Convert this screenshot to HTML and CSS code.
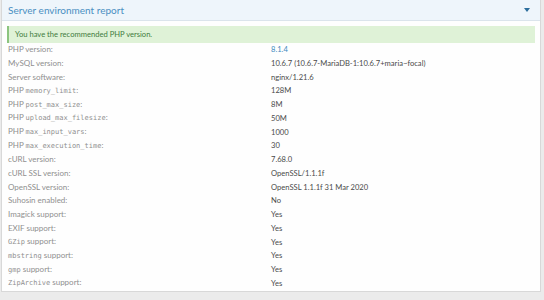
FILE: index.html
```html
<!DOCTYPE html>
<html lang="en">
<head>
<meta charset="UTF-8" />
<meta name="viewport" content="width=device-width, initial-scale=1" />
<title>Server environment report</title>
<link rel="stylesheet" href="styles.css">
</head>
<body>

<div class="block">
  <div class="block-header">
    <span>Server environment report</span>
    <span class="caret"></span>
  </div>

  <div class="block-body">
    <div class="notice">You have the recommended PHP version.</div>

    <dl class="pairs">
      <dt>PHP version:</dt><dd><a href="#">8.1.4</a></dd>
      <dt>MySQL version:</dt><dd>10.6.7 (10.6.7-MariaDB-1:10.6.7+maria~focal)</dd>
      <dt>Server software:</dt><dd>nginx/1.21.6</dd>
      <dt>PHP <code>memory_limit</code>:</dt><dd>128M</dd>
      <dt>PHP <code>post_max_size</code>:</dt><dd>8M</dd>
      <dt>PHP <code>upload_max_filesize</code>:</dt><dd>50M</dd>
      <dt>PHP <code>max_input_vars</code>:</dt><dd>1000</dd>
      <dt>PHP <code>max_execution_time</code>:</dt><dd>30</dd>
      <dt>cURL version:</dt><dd>7.68.0</dd>
      <dt>cURL SSL version:</dt><dd>OpenSSL/1.1.1f</dd>
      <dt>OpenSSL version:</dt><dd>OpenSSL 1.1.1f  31 Mar 2020</dd>
      <dt>Suhosin enabled:</dt><dd>No</dd>
      <dt>Imagick support:</dt><dd>Yes</dd>
      <dt>EXIF support:</dt><dd>Yes</dd>
      <dt><code>GZip</code> support:</dt><dd>Yes</dd>
      <dt><code>mbstring</code> support:</dt><dd>Yes</dd>
      <dt><code>gmp</code> support:</dt><dd>Yes</dd>
      <dt><code>ZipArchive</code> support:</dt><dd>Yes</dd>
    </dl>
  </div>
</div>

</body>
</html>
```

FILE: styles.css
```css
body {
  font-family: Lato, "Noto Sans", sans-serif;
  background: #ebebeb;
  color: #505050;
  margin: 0; padding: 0;
}
.block {
  width: 540px;
  margin: 0 0 0 1px;
  background: #fefefe;
  border: 1px solid #d8d8d8;
  border-top: none;
  box-sizing: border-box;
}
.block-header {
  display: flex;
  justify-content: space-between;
  align-items: center;
  height: 20px;
  padding: 0 10px 0 6px;
  background: #eef5fb;
  border-bottom: 1px solid #dbe4ec;
  color: #4a8fc2;
  font-size: 10px;
}
.caret {
  width: 0; height: 0;
  border-left: 3.5px solid transparent;
  border-right: 3.5px solid transparent;
  border-top: 4px solid #2b6d9c;
  margin-top: -1px;
}
.block-body {
  padding: 5px 5px 0 5px;
}
.notice {
  background: #dff2d7;
  border-left: 2px solid #8cc47f;
  color: #3f7c40;
  font-size: 7.6px;
  height: 17px;
  line-height: 17px;
  padding-left: 6px;
}
.pairs {
  display: grid;
  grid-template-columns: 264px 1fr;
  grid-auto-rows: 13.76px;
  align-items: center;
  margin: 0;
  line-height: 13.76px;
}
.pairs dt {
  color: #8f8f8f;
  font-size: 8px;
  padding-left: 1px;
}
.pairs dd {
  margin: 0;
  color: #4a4a4a;
  font-size: 7.6px;
}
.pairs a {
  color: #3d8ac0;
  text-decoration: none;
}
.pairs code {
  font-family: "DejaVu Sans Mono", monospace;
  font-size: 7px;
}
```
